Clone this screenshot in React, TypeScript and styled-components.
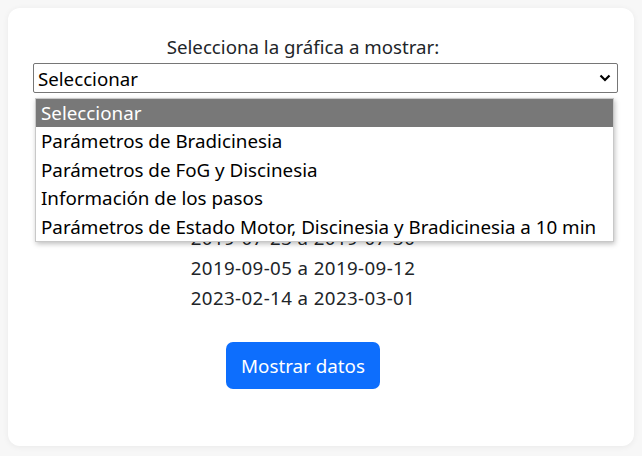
import React from "react";
import styled, { createGlobalStyle } from "styled-components";

const Global = createGlobalStyle`
  html, body { margin: 0; padding: 0; background: #f7f7f7; }
  body { font-family: "Noto Sans", "Open Sans", sans-serif; color: #212529; }
  * { box-sizing: border-box; }
`;

const Page = styled.div`
  padding: 8px;
  height: 456px;
`;

const Card = styled.div`
  position: relative;
  background: #fff;
  border-radius: 12px;
  box-shadow: 0 1px 6px rgba(0, 0, 0, 0.06);
  height: 438px;
  padding: 28px 61px 0 25px;
  display: flex;
  flex-direction: column;
  align-items: center;
`;

const Label = styled.div`
  font-size: 18.7px;
  line-height: 22px;
  height: 27px;
  text-align: center;
`;

const SelectBox = styled.div`
  align-self: stretch;
  margin-right: -45px;
  height: 30px;
  border: 1px solid #767676;
  border-radius: 2px;
  display: flex;
  align-items: center;
  justify-content: space-between;
  padding: 0 6px 0 4px;
  font-size: 18.7px;
  color: #000;
`;

const Dates = styled.div`
  margin-top: 10px;
  display: flex;
  flex-direction: column;
  align-items: center;
`;

const DateLine = styled.div`
  font-size: 18.7px;
  letter-spacing: 0.4px;
  line-height: 30px;
`;

const Button = styled.button`
  margin-top: 29px;
  background: #0d6efd;
  color: #fff;
  border: none;
  border-radius: 7px;
  height: 47px;
  padding: 0 15px;
  font-family: inherit;
  font-size: 18.8px;
`;

const Menu = styled.div`
  position: absolute;
  left: 27px;
  top: 90px;
  width: 579px;
  background: #fff;
  border: 1px solid #c8c8c8;
  box-shadow: 1px 2px 5px rgba(0, 0, 0, 0.25);
`;

const Option = styled.div<{ $active?: boolean }>`
  height: 28.4px;
  line-height: 28px;
  padding-left: 5px;
  font-size: 18.8px;
  white-space: nowrap;
  color: ${(p) => (p.$active ? "#fff" : "#000")};
  background: ${(p) => (p.$active ? "#787878" : "transparent")};
`;

const options = [
  "Seleccionar",
  "Parámetros de Bradicinesia",
  "Parámetros de FoG y Discinesia",
  "Información de los pasos",
  "Parámetros de Estado Motor, Discinesia y Bradicinesia a 10 min",
];

const dates = [
  "2018-03-12 a 2018-03-19",
  "2018-06-04 a 2018-06-11",
  "2018-10-15 a 2018-10-22",
  "2019-02-11 a 2019-02-18",
  "2019-07-23 a 2019-07-30",
  "2019-09-05 a 2019-09-12",
  "2023-02-14 a 2023-03-01",
];

export default function App() {
  return (
    <>
      <Global />
      <Page>
        <Card>
          <Label>Selecciona la gráfica a mostrar:</Label>
          <SelectBox>
            <span>Seleccionar</span>
            <svg width="12" height="8" viewBox="0 0 12 8">
              <path d="M1.5 1.5 L6 6 L10.5 1.5" fill="none" stroke="#000" strokeWidth="2.2" />
            </svg>
          </SelectBox>
          <Dates>
            {dates.map((d) => (
              <DateLine key={d}>{d}</DateLine>
            ))}
          </Dates>
          <Button>Mostrar datos</Button>
          <Menu>
            {options.map((o, i) => (
              <Option key={o} $active={i === 0}>
                {o}
              </Option>
            ))}
          </Menu>
        </Card>
      </Page>
    </>
  );
}
